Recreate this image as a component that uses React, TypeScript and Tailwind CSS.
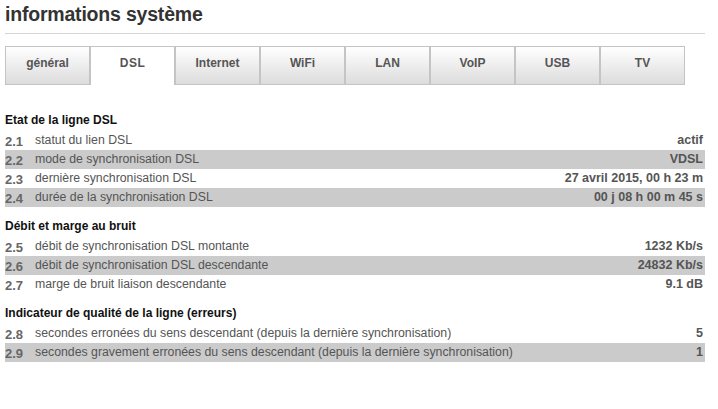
const tabs = ["général", "DSL", "Internet", "WiFi", "LAN", "VoIP", "USB", "TV"];

type Row = { num: string; label: string; value: string };
type Section = { title: string; rows: Row[] };

const sections: Section[] = [
  {
    title: "Etat de la ligne DSL",
    rows: [
      { num: "2.1", label: "statut du lien DSL", value: "actif" },
      { num: "2.2", label: "mode de synchronisation DSL", value: "VDSL" },
      { num: "2.3", label: "dernière synchronisation DSL", value: "27 avril 2015, 00 h 23 m" },
      { num: "2.4", label: "durée de la synchronisation DSL", value: "00 j 08 h 00 m 45 s" },
    ],
  },
  {
    title: "Débit et marge au bruit",
    rows: [
      { num: "2.5", label: "débit de synchronisation DSL montante", value: "1232 Kb/s" },
      { num: "2.6", label: "débit de synchronisation DSL descendante", value: "24832 Kb/s" },
      { num: "2.7", label: "marge de bruit liaison descendante", value: "9.1 dB" },
    ],
  },
  {
    title: "Indicateur de qualité de la ligne (erreurs)",
    rows: [
      { num: "2.8", label: "secondes erronées du sens descendant (depuis la dernière synchronisation)", value: "5" },
      { num: "2.9", label: "secondes gravement erronées du sens descendant (depuis la dernière synchronisation)", value: "1" },
    ],
  },
];

export default function App() {
  return (
    <div className="h-[409px] w-[718px] bg-white px-[5px] font-['Liberation_Sans',Arial,sans-serif]">
      <h1 className="pt-[2px] text-[19.5px] font-bold leading-[24px] tracking-[-0.2px] text-[#333]">informations système</h1>
      <div className="mt-[7px] h-px w-[700px] bg-[#d4d4d4]" />

      <div className="mt-[12px] flex">
        {tabs.map((tab) =>
          tab === "DSL" ? (
            <div
              key={tab}
              className="flex h-[39px] w-[85px] items-center justify-center border border-b-0 border-[#c4c4c4] bg-white pb-[6px] text-[12px] font-bold tracking-[0.5px] text-[#555]"
            >
              {tab}
            </div>
          ) : (
            <div
              key={tab}
              className="flex h-[39px] w-[85px] items-center justify-center border border-[#c4c4c4] bg-gradient-to-b from-white to-[#dcdcdc] pb-[6px] text-[12px] font-bold text-[#555]"
            >
              {tab}
            </div>
          )
        )}
      </div>

      <div className="mt-[26px] w-[700px]">
        {sections.map((section, i) => (
          <div key={section.title} className={i > 0 ? "mt-[10px]" : ""}>
            <div className="flex h-[20px] items-center pb-[2px] text-[12px] font-bold text-[#111]">{section.title}</div>
            {section.rows.map((row, j) => (
              <div
                key={row.num}
                className={`flex h-[19px] items-center text-[12.3px] ${j % 2 === 1 ? "bg-[#cbcbcb]" : ""}`}
              >
                <span className="w-[30px] pt-[2px] text-[13px] font-bold text-[#666]">{row.num}</span>
                <span className="flex-1 text-[#555]">{row.label}</span>
                <span className="pr-[2px] text-[12.5px] font-bold text-[#555]">{row.value}</span>
              </div>
            ))}
          </div>
        ))}
      </div>
    </div>
  );
}
